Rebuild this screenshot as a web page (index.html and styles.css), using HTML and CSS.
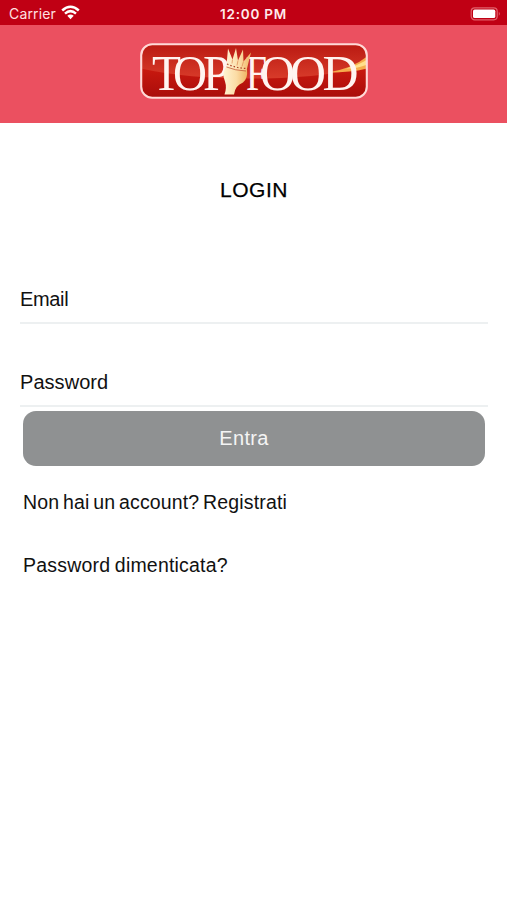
FILE: index.html
```html
<!DOCTYPE html>
<html lang="it">
<head>
<meta charset="utf-8">
<title>Login</title>
<link rel="stylesheet" href="styles.css">
</head>
<body>
<div class="status">
  <div class="carrier"><span class="carrier-name">Carrier</span>
    <svg class="wifi" width="19" height="15" viewBox="0 0 19 15"><g fill="none" stroke="#fff" stroke-width="2.5"><path d="M1.2 5.5Q9.5-2 17.8 5.5"/><path d="M4 8.6Q9.5 3.7 15 8.6"/></g><path d="M6.3 10.8Q9.5 8.3 12.7 10.8L9.5 14.3Z" fill="#fff"/></svg>
  </div>
  <span class="clock">12:00 PM</span>
  <svg class="battery" width="31" height="14" viewBox="0 0 31 14"><rect x="1.2" y=".8" width="26" height="12" rx="3.5" fill="none" stroke="#e0606b" stroke-width="1.2"/><rect x="3" y="2.5" width="22.3" height="8.6" rx="1.7" fill="#fff"/><path d="M28.8 4.7q2 2 0 4z" fill="#e0606b"/></svg>
</div>
<header class="brand">
  <svg class="logo" width="228" height="56" viewBox="140 43.5 228 56" role="img" aria-label="Top Food">
    <defs>
      <linearGradient id="red" x2="0" y2="1"><stop stop-color="#b71512"/><stop offset=".45" stop-color="#c9190f"/><stop offset="1" stop-color="#a90d0b"/></linearGradient>
      <linearGradient id="shine" x2="0" y2="1"><stop stop-color="#b91911"/><stop offset="1" stop-color="#d83b2a"/></linearGradient>
      <linearGradient id="gold"><stop stop-color="#fff3d2"/><stop offset=".55" stop-color="#fbdca5"/><stop offset="1" stop-color="#efb565"/></linearGradient>
      <clipPath id="plate"><rect x="142" y="45.5" width="224" height="52" rx="10"/></clipPath>
    </defs>
    <rect x="141.2" y="44.7" width="225.6" height="53.6" rx="11" fill="url(#red)"/>
    <g clip-path="url(#plate)">
      <path d="M141 44H368V66Q335 77 265 79Q190 80 141 69Z" fill="url(#shine)"/>
      <path d="M328 73Q353 69 367 57V69Q352 73 328 73Z" fill="#f6ab4c"/>
      <path d="M346 69Q360 65 367 60V65Q358 69 346 69Z" fill="#ffdf8b"/>
    </g>
    <rect x="141.2" y="44.7" width="225.6" height="53.6" rx="11" fill="none" stroke="#ffd9d7" stroke-width="2.1"/>
    <g class="letters">
      <text x="152" y="90.3" textLength="29" lengthAdjust="spacingAndGlyphs">T</text>
      <text x="173" y="90.3" textLength="34" lengthAdjust="spacingAndGlyphs">O</text>
      <text x="203" y="90.3" textLength="27" lengthAdjust="spacingAndGlyphs">P</text>
      <text x="246" y="90.3" textLength="21" lengthAdjust="spacingAndGlyphs">F</text>
      <text x="260" y="90.3" textLength="35" lengthAdjust="spacingAndGlyphs">O</text>
      <text x="290" y="90.3" textLength="36" lengthAdjust="spacingAndGlyphs">O</text>
      <text x="322.5" y="90.3" textLength="36" lengthAdjust="spacingAndGlyphs">D</text>
    </g>
    <path d="M227 66L247 70Q248 79 243 83Q235 86 234 95H224.500Q227 88 225 82Q221 73 227 66Z" fill="url(#gold)"/>
    <path d="M226.500 66L228 49L232.500 60L236 48.500L238 61L243 50L243.500 62L251 53L246.500 71Q236 71 226.500 66Z" fill="url(#gold)"/>
    <path d="M232.500 60L232 64M238 61L237 66M243.500 62L242 67" fill="none" stroke="#dc8850" stroke-width=".7"/>
    <path d="M227 64.500Q236 68.500 246 69" fill="none" stroke="#ac4126" stroke-width="1.2" stroke-dasharray="1.5 2"/>
    <path d="M226.500 67.500Q235 71 246 71.500" fill="none" stroke="#bd4a2e" stroke-width=".7"/>
  </svg>
</header>
<main>
  <h1><span>LOGIN</span></h1>
  <form>
    <div class="field"><label class="email">Email</label></div>
    <div class="field"><label class="password">Password</label></div>
    <button type="button">Entra</button>
  </form>
  <div class="links"><a class="register">Non hai un account? Registrati</a><a class="forgot">Password dimenticata?</a></div>
</main>
</body>
</html>
```
FILE: styles.css
```css
* { box-sizing: border-box; }
body { margin: 0; min-height: 900px; background: #fff; color: #111; font-family: "Liberation Sans", Arial, sans-serif; font-size: 20px; }
.status { height: 25px; display: grid; grid-template-columns: 1fr auto 1fr; align-items: center; padding: 2px 6px 0 9px; background: #c00014; color: #fff; font: 14px/20px Inter, sans-serif; }
.carrier { display: flex; align-items: center; gap: 5px; color: #ffe0e1; }
.carrier-name { font-size: 14px; letter-spacing: .15px; }
.wifi { margin-top: -2px; }
.clock { font-weight: 600; font-size: 13.5px; letter-spacing: .75px; margin: 0 3px 0 0; color: #ffebeb; }
.battery { justify-self: end; }
.brand { height: 98px; padding-top: 18px; display: flex; justify-content: center; align-items: flex-start; background: #eb5060; }
.logo { display: block; margin-left: 1px; }
.letters { font: 51px "Liberation Serif", serif; fill: #fff4f0; }
main { padding: 0 19px 0 20px; }
h1 { margin: 55px 0 0; height: 24px; text-align: center; font-weight: 400; font-size: 21px; line-height: 24px; letter-spacing: .5px; color: #000; -webkit-text-stroke: .25px #000; }
form { padding-top: 71px; }
.field { height: 51px; border-bottom: 2px solid #edf0f1; padding-top: 14px; line-height: 24px; }
.field + .field { margin-top: 32px; }
.field label { display: block; }
.email { letter-spacing: -.35px; }
.password { letter-spacing: .05px; }
button { display: block; width: 462px; height: 55px; margin: 4px 0 0 3px; padding: 0 20px 2px 0; border: 0; border-radius: 13px; background: #8f9192; color: #f4f4f4; font: 20px/24px "Liberation Sans", Arial, sans-serif; letter-spacing: .3px; }
.links { display: flex; flex-direction: column; align-items: flex-start; gap: 39px; padding: 24px 0 0 3px; line-height: 24px; font-size: 19.5px; }
.register { word-spacing: -1.8px; letter-spacing: .15px; }
.forgot { letter-spacing: .2px; word-spacing: -1px; }
```
